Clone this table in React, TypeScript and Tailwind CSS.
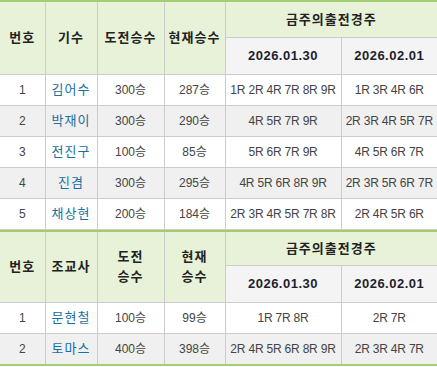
const jockeys = [
  { no: 1, name: "김어수", goal: "300승", now: "287승", d1: "1R 2R 4R 7R 8R 9R", d2: "1R 3R 4R 6R" },
  { no: 2, name: "박재이", goal: "300승", now: "290승", d1: "4R 5R 7R 9R", d2: "2R 3R 4R 5R 7R" },
  { no: 3, name: "전진구", goal: "100승", now: "85승", d1: "5R 6R 7R 9R", d2: "4R 5R 6R 7R" },
  { no: 4, name: "진겸", goal: "300승", now: "295승", d1: "4R 5R 6R 8R 9R", d2: "2R 3R 5R 6R 7R" },
  { no: 5, name: "채상현", goal: "200승", now: "184승", d1: "2R 3R 4R 5R 7R 8R", d2: "2R 4R 5R 6R" },
];

const trainers = [
  { no: 1, name: "문현철", goal: "100승", now: "99승", d1: "1R 7R 8R", d2: "2R 7R" },
  { no: 2, name: "토마스", goal: "400승", now: "398승", d1: "2R 4R 5R 6R 8R 9R", d2: "2R 3R 4R 7R" },
];

type Row = { no: number; name: string; goal: string; now: string; d1: string; d2: string };

const th = "bg-[#e8f2d9] border border-[#cccccc] text-[#222] font-bold text-[13px] tracking-[1px] p-0";
const td = "border border-[#cccccc] text-[#444] text-[12px] p-0 text-center";

function Board({ rows, who, split, last }: { rows: Row[]; who: string; split: boolean; last?: boolean }) {
  return (
    <table className={`w-full table-fixed border-collapse border-t-2 border-t-[#a3cd72] ${last ? "border-b-2 border-b-[#a3cd72]" : ""}`}>
      <colgroup>
        <col className="w-[45px]" />
        <col className="w-[52px]" />
        <col className="w-[67px]" />
        <col className="w-[61px]" />
        <col className="w-[116px]" />
        <col />
      </colgroup>
      <thead>
        <tr className={split ? "h-[35px]" : "h-[36px]"}>
          <th rowSpan={2} className={`${th} border-l-0`}>번호</th>
          <th rowSpan={2} className={th}>{who}</th>
          <th rowSpan={2} className={`${th} leading-[20px]`}>{split ? <>도전<br />승수</> : "도전승수"}</th>
          <th rowSpan={2} className={`${th} leading-[20px]`}>{split ? <>현재<br />승수</> : "현재승수"}</th>
          <th colSpan={2} className={`${th} border-r-0`}>금주의출전경주</th>
        </tr>
        <tr className="h-[37px]">
          <th className="bg-[#f4f4f4] border border-[#cccccc] text-[#1e1e2e] font-bold text-[13px] tracking-[0.5px] p-0">2026.01.30</th>
          <th className="bg-[#f4f4f4] border border-[#cccccc] border-r-0 text-[#1e1e2e] font-bold text-[13px] tracking-[0.5px] p-0">2026.02.01</th>
        </tr>
      </thead>
      <tbody>
        {rows.map((r, i) => (
          <tr key={r.no} className={`h-[31px] ${i % 2 === 1 ? "bg-[#f0f0f0]" : "bg-white"}`}>
            <td className={`${td} border-l-0`}>{r.no}</td>
            <td className={`${td} text-[#17709e] text-[13px] tracking-[1px]`}>{r.name}</td>
            <td className={td}>{r.goal}</td>
            <td className={td}>{r.now}</td>
            <td className={`${td} tracking-[-0.2px]`}>{r.d1}</td>
            <td className={`${td} border-r-0 tracking-[-0.2px]`}>{r.d2}</td>
          </tr>
        ))}
      </tbody>
    </table>
  );
}

export default function App() {
  return (
    <div className="w-[437px] bg-white font-['Liberation_Sans','Noto_Sans_CJK_KR',sans-serif]">
      <Board rows={jockeys} who="기수" split={false} />
      <Board rows={trainers} who="조교사" split={true} last />
    </div>
  );
}
